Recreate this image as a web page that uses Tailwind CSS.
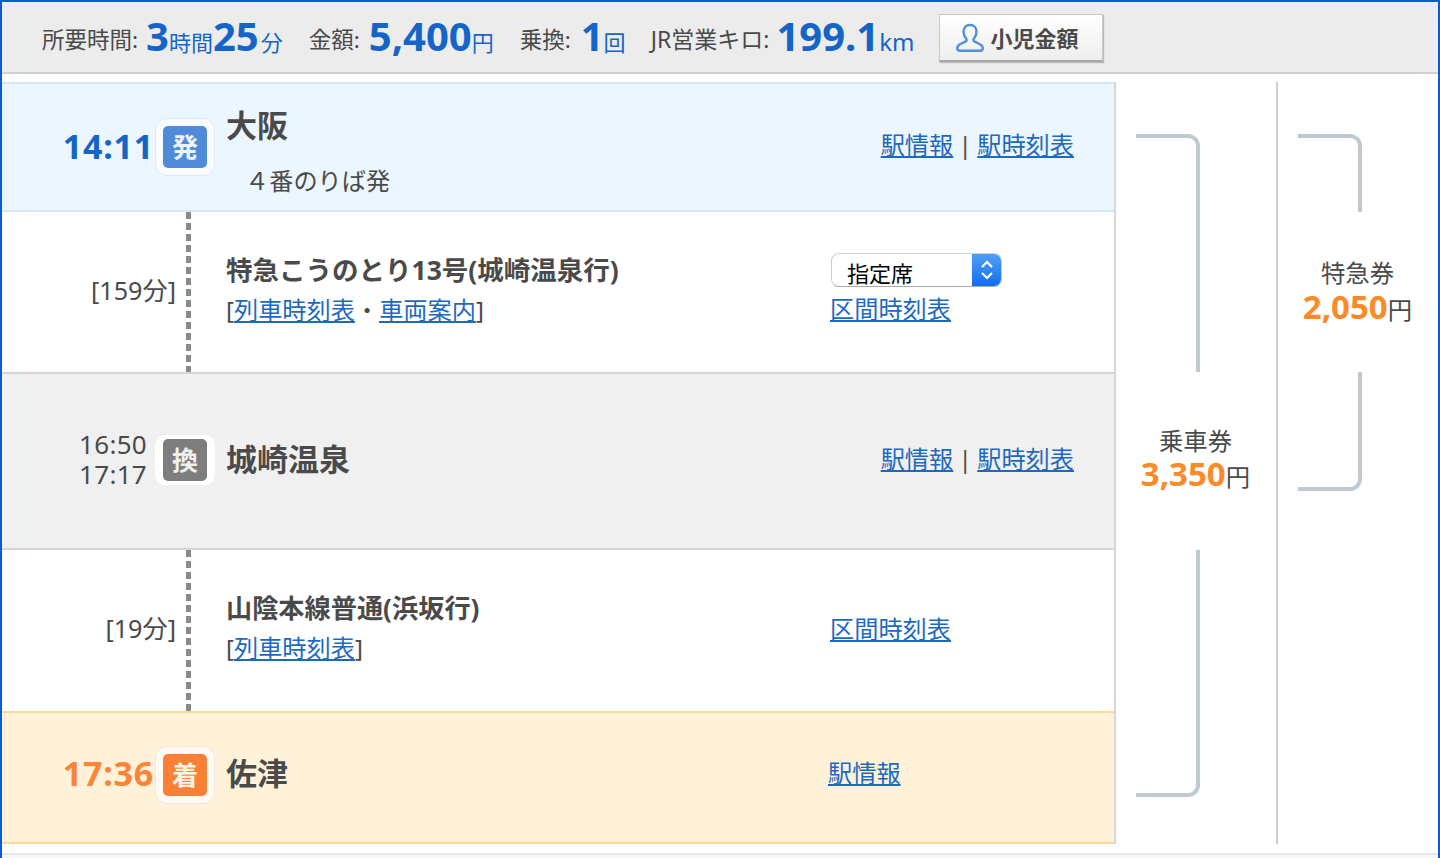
<!DOCTYPE html>
<html lang="ja">
<head>
    <meta charset="UTF-8">
    <title>経路詳細</title>
    <script src="https://cdn.jsdelivr.net/npm/@tailwindcss/browser@4"></script>
</head>
<body class="bg-white font-['Noto_Sans','Noto_Sans_CJK_JP',sans-serif] text-[#4a4a4a]">
<div class="w-[1440px] h-[858px] overflow-hidden flex flex-col border-x-2 border-t-2 border-[#0b5bd3]">

    <!-- summary bar -->
    <div class="h-[72px] shrink-0 bg-[#ececec] border-b-2 border-[#cfcfcf] flex items-center pl-[40px] text-[22px] leading-none">
        <div class="flex items-baseline text-[#1565c8] -mt-[3px]">
            <span class="text-[22.5px] text-[#4a4a4a] mr-[8px] -translate-y-[3px]">所要時間:</span>
            <span class="text-[40px] font-bold">3</span><span>時間</span><span class="text-[40px] font-bold">25</span><span class="ml-[2px]">分</span>
            <span class="text-[22.5px] text-[#4a4a4a] ml-[26px] mr-[9px] -translate-y-[3px]">金額:</span>
            <span class="text-[40px] font-bold">5,400</span><span>円</span>
            <span class="text-[22.5px] text-[#4a4a4a] ml-[26px] mr-[10px] -translate-y-[3px]">乗換:</span>
            <span class="text-[40px] font-bold">1</span><span>回</span>
            <span class="text-[23px] text-[#4a4a4a] ml-[25px] mr-[7px] -translate-y-[3px]">JR営業キロ:</span>
            <span class="text-[40px] font-bold">199.1</span><span class="text-[24px]">km</span>
        </div>
        <button class="ml-[25px] mt-[2px] w-[164px] h-[48px] flex items-center pl-[16px] gap-[6px] bg-gradient-to-b from-white to-[#eeeeee] border border-[#c8c8c8] border-b-2 border-b-[#a8a8a8] shadow-[1px_1px_1px_#bbb] text-[22px] font-bold text-[#4a4a4a]">
            <svg width="28" height="30" viewBox="0 0 28 30" fill="none" stroke="#4f8fdc" stroke-width="2.4">
                <path d="M14 2c4 0 6.500 2.800 6.500 6.500 0 3.200-1.300 5.500-2.700 7.300-.9 1.100-.4 2.300.9 2.900l4.800 2.300c2 1 3.300 2.300 3.300 4.100 0 1.600-1 2.700-2.800 2.700H4c-1.800 0-2.800-1.100-2.800-2.700 0-1.800 1.300-3.100 3.300-4.100l4.800-2.300c1.300-.6 1.800-1.800.9-2.900-1.400-1.800-2.700-4.100-2.700-7.300C7.500 4.800 10 2 14 2z"/>
            </svg>
            小児金額
        </button>
    </div>

    <div class="flex pt-[8px] h-[770px] shrink-0">
        <!-- route rows -->
        <div class="w-[1114px] shrink-0 border-r-2 border-[#d4d8dc] text-[24.2px] leading-none">

            <div class="h-[130px] bg-[#ebf6fe] border-y-2 border-[#d3e8f7] flex">
                <div class="w-[152px] mr-[1px] text-right text-[34px] tracking-[0.8px] font-bold text-[#1565c8] pt-[42px] leading-[40px]">14:11</div>
                <div class="mt-[34px] w-[60px] h-[58px] rounded-[12px] bg-white/70 border border-[#e4e6f2] flex items-center justify-center">
                    <span class="w-[44px] h-[42px] rounded-[5px] bg-[#4f8bd9] text-white/90 text-[26px] font-bold flex items-center justify-center">発</span>
                </div>
                <div class="ml-[11px]">
                    <div class="text-[31px] font-bold mt-[26px]">大阪</div>
                    <div class="ml-[19px] mt-[28px]">４番のりば発</div>
                </div>
                <div class="ml-auto mr-[40px] mt-[49px] flex">
                    <a href="#" class="text-[#1d69bf] underline">駅情報</a><span class="w-[24px] text-center">|</span><a href="#" class="text-[#1d69bf] underline">駅時刻表</a>
                </div>
            </div>

            <div class="h-[162px] flex border-b-2 border-[#d5d5d5]">
                <div class="w-[174px] text-right text-[25.2px] pt-[66px]">[159分]</div>
                <div class="ml-[10px] w-[5px] h-full bg-[repeating-linear-gradient(to_bottom,#8a8a8a_0,#8a8a8a_7px,transparent_7px,transparent_11px)]"></div>
                <div class="ml-[35px] w-[604px] pt-[45px]">
                    <div class="font-bold text-[26.5px]">特急こうのとり13号(城崎温泉行)</div>
                    <div class="mt-[14px]">[<a href="#" class="text-[#1d69bf] underline">列車時刻表</a>・<a href="#" class="text-[#1d69bf] underline">車両案内</a>]</div>
                </div>
                <div class="pt-[41px]">
                    <div class="ml-[1px] w-[171px] h-[34px] flex rounded-[8px] border border-[#cfcfcf] border-b-[#aaa] bg-white overflow-hidden text-[22px] text-black">
                        <span class="flex-1 pl-[15px] pt-[8px]">指定席</span>
                        <span class="w-[29px] bg-gradient-to-b from-[#4d9ff5] to-[#0d6ef0] flex items-center justify-center">
                            <svg width="14" height="24" viewBox="0 0 14 24" fill="none" stroke="white" stroke-width="2.200"><path d="M2 9l5-5 5 5M2 15l5 5 5-5"/></svg>
                        </span>
                    </div>
                    <a href="#" class="block mt-[10px] text-[#1d69bf] underline">区間時刻表</a>
                </div>
            </div>

            <div class="h-[176px] bg-[#f0f0f0] border-b-2 border-[#d5d5d5] flex">
                <div class="w-[145px] text-right text-[26px] tracking-[0.3px] text-[#4a4a4a] pt-[55px] leading-[30px]">16:50<br>17:17</div>
                <div class="ml-[8px] mt-[61px] w-[60px] h-[50px] rounded-[10px] bg-white flex items-center justify-center">
                    <span class="w-[44px] h-[42px] rounded-[5px] bg-[#7e7e7e] text-[#f0f0f0] text-[26px] font-bold flex items-center justify-center">換</span>
                </div>
                <div class="ml-[11px] text-[31px] font-bold pt-[70px]">城崎温泉</div>
                <div class="ml-auto mr-[40px] mt-[73px] flex">
                    <a href="#" class="text-[#1d69bf] underline">駅情報</a><span class="w-[24px] text-center">|</span><a href="#" class="text-[#1d69bf] underline">駅時刻表</a>
                </div>
            </div>

            <div class="h-[161px] flex">
                <div class="w-[174px] text-right text-[25.2px] pt-[66px]">[19分]</div>
                <div class="ml-[10px] w-[5px] h-full bg-[repeating-linear-gradient(to_bottom,#8a8a8a_0,#8a8a8a_7px,transparent_7px,transparent_11px)]"></div>
                <div class="ml-[35px] w-[604px] pt-[45px]">
                    <div class="font-bold text-[26.2px]">山陰本線普通(浜坂行)</div>
                    <div class="mt-[15px]">[<a href="#" class="text-[#1d69bf] underline">列車時刻表</a>]</div>
                </div>
                <div class="pt-[67px]">
                    <a href="#" class="block text-[#1d69bf] underline">区間時刻表</a>
                </div>
            </div>

            <div class="h-[133px] bg-[#fff2d8] border-y-2 border-[#fbd99a] flex">
                <div class="w-[152px] mr-[1px] text-right text-[34px] tracking-[0.8px] font-bold text-[#fa8539] pt-[40px] leading-[40px]">17:36</div>
                <div class="mt-[33px] w-[60px] h-[58px] rounded-[12px] bg-white/70 border border-[#f3e6dc] flex items-center justify-center">
                    <span class="w-[44px] h-[42px] rounded-[5px] bg-[#fa8038] text-[#fff2e6] text-[26px] font-bold flex items-center justify-center">着</span>
                </div>
                <div class="ml-[11px] text-[31px] font-bold pt-[45px]">佐津</div>
                <div class="ml-[540px] pt-[48px]">
                    <a href="#" class="text-[#1d69bf] underline">駅情報</a>
                </div>
            </div>
        </div>

        <!-- fare column: 乗車券 -->
        <div class="w-[162px] shrink-0 border-r-2 border-[#c9ced2] flex flex-col pl-[20px] pt-[52px]">
            <div class="w-[64px] h-[238px] border-t-4 border-r-4 border-[#bfcad0] rounded-tr-[12px]"></div>
            <div class="h-[178px] w-[119px] pb-[3px] flex flex-col items-center justify-center text-[24.4px] leading-none">
                <span class="mb-[4px]">乗車券</span>
                <div class="flex items-baseline"><span class="text-[33px] font-bold text-[#fb8a28]">3,350</span><span>円</span></div>
            </div>
            <div class="w-[64px] h-[247px] border-b-4 border-r-4 border-[#bfcad0] rounded-br-[12px]"></div>
        </div>

        <!-- fare column: 特急券 -->
        <div class="w-[160px] shrink-0 flex flex-col pl-[20px] pt-[52px]">
            <div class="w-[64px] h-[78px] border-t-4 border-r-4 border-[#bfcad0] rounded-tr-[12px]"></div>
            <div class="h-[160px] w-[119px] flex flex-col items-center justify-center text-[24.4px] leading-none">
                <span class="mb-[4px]">特急券</span>
                <div class="flex items-baseline"><span class="text-[33px] font-bold text-[#fb8a28]">2,050</span><span>円</span></div>
            </div>
            <div class="w-[64px] h-[119px] border-b-4 border-r-4 border-[#bfcad0] rounded-br-[12px]"></div>
        </div>
    </div>

    <div class="mt-[9px] flex-1 bg-[#f6f6f8] border-t-2 border-[#e8e8ee]"></div>
</div>
</body>
</html>
